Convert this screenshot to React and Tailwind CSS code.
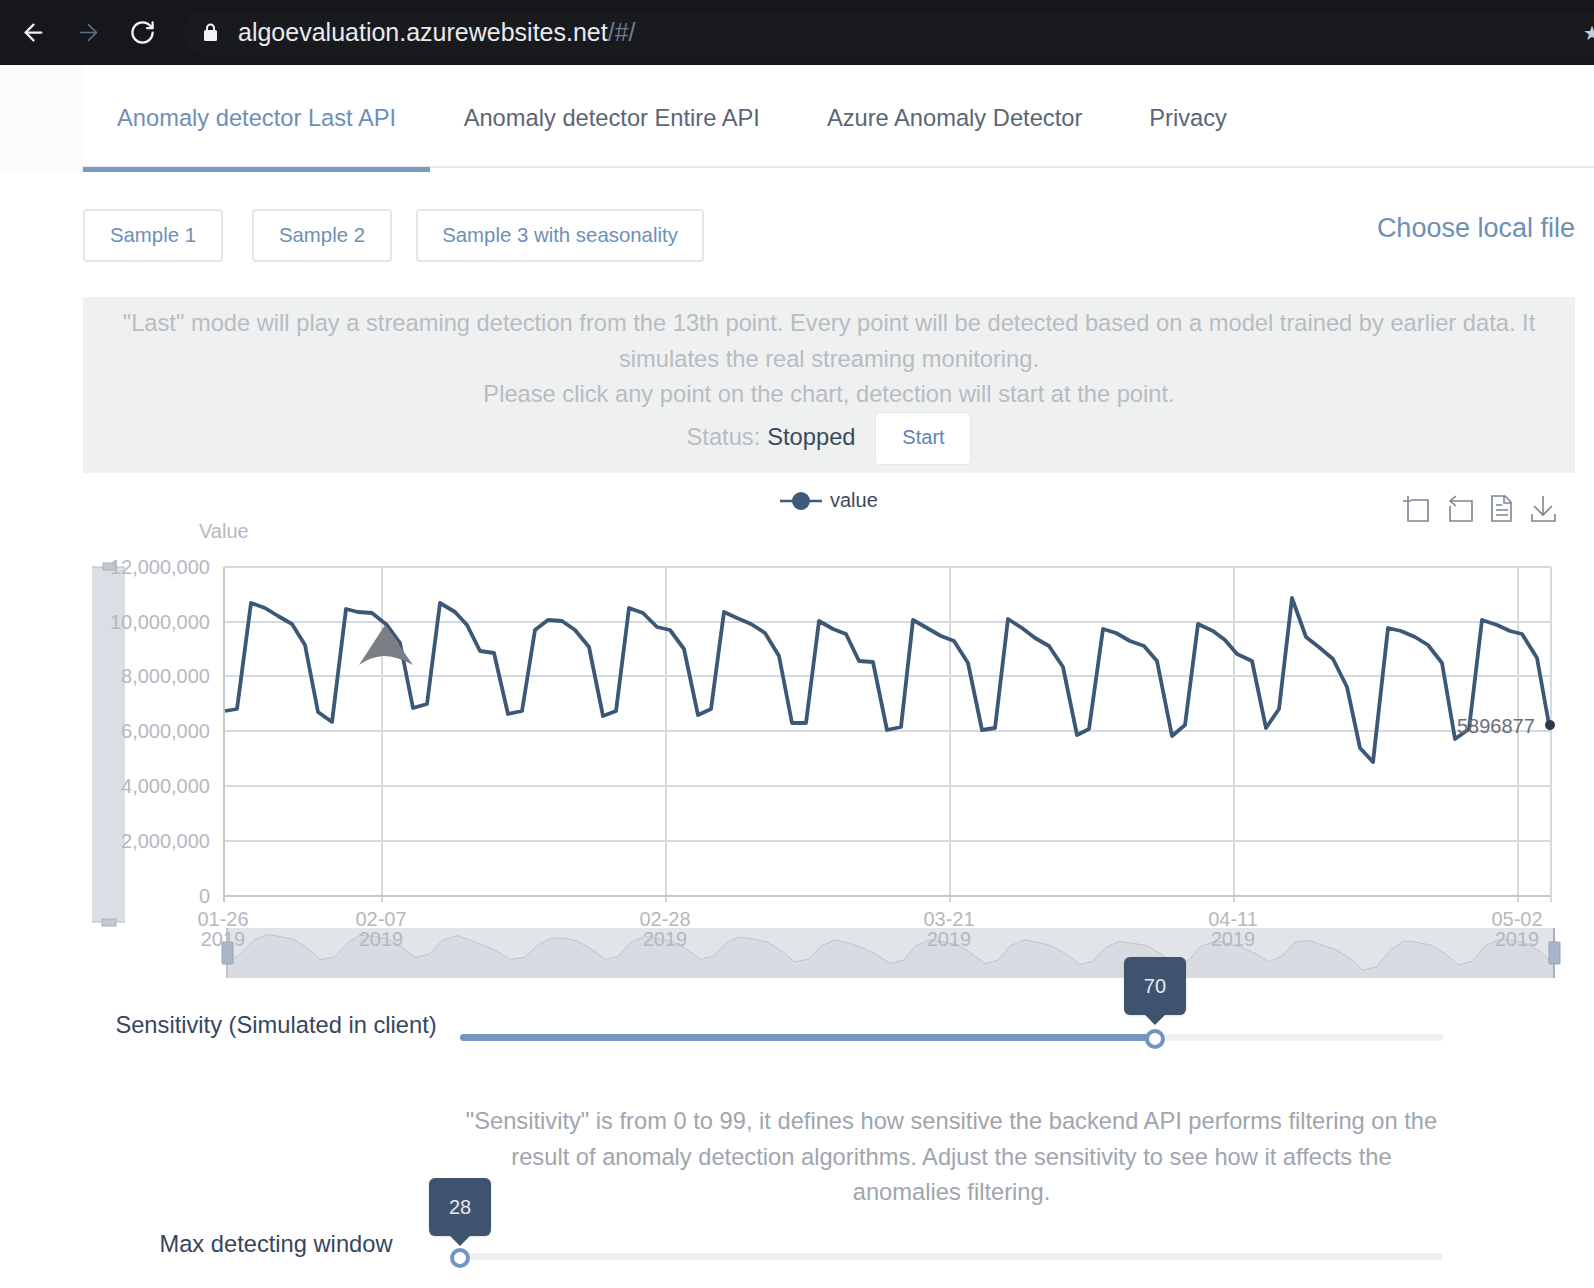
import { ArrowLeft, ArrowRight, RotateCw } from 'lucide-react'

const points = [
  [225,711],[237,709],[251,603],[265,608],[278,616],[292,624],[305,645],[318,712],[332,722],[346,609],
  [358,612],[372,613],[387,625],[400,643],[413,708],[427,704],[440,603],[455,612],[467,625],[480,651],
  [494,653],[508,714],[522,711],[535,630],[548,620],[562,621],[575,630],[589,647],[603,716],[616,711],
  [629,608],[643,613],[657,627],[670,630],[684,649],[698,715],[711,709],[724,612],[737,618],[751,624],
  [765,633],[779,656],[792,723],[806,723],[819,621],[833,629],[846,634],[859,661],[873,662],[887,730],
  [901,727],[913,620],[927,628],[941,636],[954,641],[968,663],[982,730],[995,728],[1008,619],[1022,628],
  [1035,638],[1049,646],[1063,667],[1077,735],[1089,729],[1103,629],[1116,633],[1130,641],[1144,646],[1157,661],
  [1172,736],[1185,725],[1198,624],[1213,631],[1225,640],[1237,654],[1252,661],[1266,728],[1279,709],[1292,598],
  [1306,637],[1320,648],[1333,659],[1347,687],[1360,748],[1373,762],[1388,628],[1401,631],[1415,637],[1428,645],
  [1442,663],[1455,739],[1469,729],[1482,620],[1497,625],[1510,631],[1522,634],[1537,658],[1550,730],
]

const linePath = points.map(p => p.join(',')).join(' ')

// the zoom preview is a smoothed copy of the series
const smooth = points.map(([x, y], i) => {
  const prev = points[Math.max(i - 1, 0)][1]
  const next = points[Math.min(i + 1, points.length - 1)][1]
  return [x, (prev + y * 2 + next) / 4]
})
const miniLine = smooth.map(([x, y]) => `${227 + (x - 225) * 1.001},${(939 + (y - 625) * 0.28).toFixed(1)}`).join(' ')
const miniArea = `227,978 ${miniLine} 1554,978`

const yLabels = [
  ['12,000,000', 567], ['10,000,000', 622], ['8,000,000', 676], ['6,000,000', 731],
  ['4,000,000', 786], ['2,000,000', 841], ['0', 896],
]
const xLabels = [['01-26', 223], ['02-07', 381], ['02-28', 665], ['03-21', 949], ['04-11', 1233], ['05-02', 1517]]

function Chart() {
  return (
    <svg viewBox="83 473 1492 520" width="1492" height="520" className="block" fontFamily="'Liberation Sans', Arial, sans-serif">
      {/* legend */}
      <line x1="780" y1="501" x2="822" y2="501" stroke="#3f5a7a" strokeWidth="2.5" />
      <circle cx="801" cy="501" r="9" fill="#3f5a7a" />
      <text x="830" y="507" fontSize="20" fill="#3d4a5c">value</text>
      <text x="199" y="538" fontSize="20" fill="#b5b8bf">Value</text>

      {/* toolbox */}
      <g fill="none" stroke="#7d8590" strokeWidth="1.6">
        <path d="M1403 501h8M1408 496v8M1411 500h17v21h-20v-17" />
        <path d="M1456 496l-6 5 6 5M1450 501h22v20h-22v-15" />
        <path d="M1492 496h13l6 6v19h-19zM1504 496v7h7M1496 505h6M1496 510h12M1496 515h12" />
        <path d="M1543 496v19M1534 506l9 9 9-9M1532 514v7h23v-7" />
      </g>

      {/* vertical zoom */}
      <rect x="92" y="567" width="33" height="355" fill="#dadfe6" />
      <path d="M92 567h33M92 922h33" stroke="#b5bac3" strokeWidth="1" />
      <rect x="103" y="563" width="12" height="7" fill="#c3c9d3" stroke="#aab1bc" />
      <rect x="102" y="919" width="14" height="7" fill="#c3c9d3" stroke="#aab1bc" />

      {/* horizontal zoom */}
      <rect x="227" y="928" width="1327" height="50" fill="#e1e4e9" />
      <polygon points={miniArea} fill="#d8dbe1" />
      <polyline points={miniLine} fill="none" stroke="#c0c4cb" strokeWidth="1" />
      <rect x="226" y="928" width="2" height="50" fill="#bfc4cd" />
      <rect x="1553" y="928" width="2" height="50" fill="#a9aeb7" />
      <rect x="222" y="942" width="11" height="22" rx="1" fill="#a9b6c8" stroke="#93a3b8" />
      <rect x="1549" y="942" width="11" height="22" rx="1" fill="#a9b6c8" stroke="#93a3b8" />

      {/* grid */}
      <g stroke="#d5dae2" strokeWidth="2">
        {yLabels.slice(0, 6).map(([t, y]) => <line key={t} x1="224" y1={y} x2="1551" y2={y} />)}
        {[382, 666, 950, 1234, 1518, 1551].map(x => <line key={x} x1={x} y1="567" x2={x} y2="902" />)}
      </g>
      <path d="M224 567V902M224 896H1551" stroke="#c4c8d0" strokeWidth="2" fill="none" />

      {yLabels.map(([t, y]) => (
        <text key={t} x="210" y={y + 7} textAnchor="end" fontSize="20" fill="#b5b8bf">{t}</text>
      ))}
      {xLabels.map(([d, x]) => (
        <g key={d} fontSize="20" fill="#b5b8bf" textAnchor="middle">
          <text x={x} y="926">{d}</text>
          <text x={x} y="946">2019</text>
        </g>
      ))}

      <polyline points={linePath} fill="none" stroke="#3d5877" strokeWidth="3.8" strokeLinejoin="round" />
      <circle cx="1550" cy="725" r="5" fill="#2c3a4e" />
      <text x="1457" y="733" fontSize="20" fill="#6a6e76">5896877</text>

      {/* mouse cursor */}
      <path d="M385 625L413 665Q397 656 383 656Q370 657 359 665Z" fill="#7b7e85" />
    </svg>
  )
}

function Slider({ value, pct, tipClass }) {
  return (
    <div className="relative h-[7px] rounded-full bg-[#eef0f2]">
      <div className="absolute left-0 top-0 h-full rounded-full bg-[#7496c2]" style={{ width: `${pct}%` }} />
      <div
        className="absolute top-[-5px] h-[20px] w-[20px] -translate-x-1/2 rounded-full border-[4px] border-[#6f96c2] bg-white"
        style={{ left: `${pct}%` }}
      />
      <div
        className={`absolute flex h-[58px] w-[62px] -translate-x-1/2 items-center justify-center rounded-md bg-[#3f536f] text-[20px] text-[#e6e9ee] shadow ${tipClass}`}
        style={{ left: `${pct}%` }}
      >
        {value}
        <div className="absolute bottom-[-7px] left-1/2 h-[14px] w-[14px] -translate-x-1/2 rotate-45 bg-[#3f536f]" />
      </div>
    </div>
  )
}

export default function App() {
  return (
    <div className="h-[1288px] overflow-hidden bg-white font-['Liberation_Sans',Arial,sans-serif]">
      <div className="flex h-[65px] items-center overflow-hidden bg-[#16171b] pl-[20px]">
        <ArrowLeft size={27} strokeWidth={2} className="shrink-0 text-[#f1f3f4]" />
        <ArrowRight size={27} strokeWidth={1.5} className="ml-[28px] shrink-0 text-[#5f6f86]" />
        <RotateCw size={27} strokeWidth={2} className="ml-[27px] shrink-0 text-[#f1f3f4]" />
        <div className="ml-[27px] flex h-[44px] w-[1430px] shrink-0 items-center rounded-l-full bg-[#191a1e] pl-[20px]">
          <svg width="15" height="19" viewBox="0 0 15 19" className="text-[#f1f3f4]">
            <path d="M4 8V5a3.5 3.5 0 0 1 7 0v3" fill="none" stroke="currentColor" strokeWidth="2" />
            <rect x="1" y="7" width="13" height="11" rx="1.5" fill="currentColor" />
          </svg>
          <span className="ml-[20px] text-[25px] text-[#e8eaed]">
            algoevaluation.azurewebsites.net<span className="text-[#6d7d93]">/#/</span>
          </span>
          <span className="ml-auto mr-[12px] text-[20px] text-[#c3cbd8]">★</span>
        </div>
      </div>

      <div className="flex h-[107px]">
        <div className="w-[83px] bg-[#fbfbfb]" />
        <nav className="flex h-[103px] flex-1 border-b-2 border-[#e6e8ea] text-[23.7px] text-[#5b6675]">
          <div className="flex h-[107px] items-center self-start border-b-[5px] border-[#7a9ac2] px-[34px] pt-[6px] text-[#6d8fb8]">
            Anomaly detector Last API
          </div>
          <div className="flex items-center px-[33.5px] pt-[7px]">Anomaly detector Entire API</div>
          <div className="flex items-center px-[33.5px] pt-[7px]">Azure Anomaly Detector</div>
          <div className="flex items-center px-[33.5px] pt-[7px]">Privacy</div>
        </nav>
      </div>

      <main className="pl-[83px] pr-[19px]">
        <div className="flex items-start justify-between pt-[37px]">
          <div className="flex text-[20.4px] font-medium text-[#6d8fb8]">
            <button className="h-[53px] w-[140px] rounded border-2 border-[#e3e6ea]">Sample 1</button>
            <button className="ml-[29px] h-[53px] w-[140px] rounded border-2 border-[#e3e6ea]">Sample 2</button>
            <button className="ml-[24px] h-[53px] w-[288px] rounded border-2 border-[#e3e6ea]">Sample 3 with seasonality</button>
          </div>
          <div className="text-[27px] leading-[38px] text-[#6d8fb8]">Choose local file</div>
        </div>

        <div className="mt-[35px] h-[176px] bg-[#eff1f1] pt-[9px] text-center text-[23.7px] leading-[35.5px] text-[#b8bcc3]">
          <p className="px-[30px]">
            "Last" mode will play a streaming detection from the 13th point. Every point will be detected based on a model trained by earlier data. It simulates the real streaming monitoring.
          </p>
          <p>Please click any point on the chart, detection will start at the point.</p>
          <div className="mt-[-1px] flex items-center justify-center">
            <span>Status:</span>
            <span className="ml-[7px] text-[#3a4a5e]">Stopped</span>
            <button className="ml-[20px] h-[53px] w-[96px] rounded border border-[#e3e6ea] bg-white text-[20px] font-medium text-[#5d84b4]">Start</button>
          </div>
        </div>

        <Chart />

        <div className="mt-[17px] flex">
          <div className="ml-[9px] mt-[-3px] w-[368px] text-center text-[23.7px] leading-[36px] text-[#37465c]">Sensitivity (Simulated in client)</div>
          <div className="mr-[132px] flex-1 pt-[24px]">
            <Slider value={70} pct={70.7} tipClass="bottom-[26px]" />
          </div>
        </div>

        <div className="ml-[377px] mr-[132px] mt-[61px] text-center text-[23.7px] leading-[35.5px] text-[#a0a5ae]">
          "Sensitivity" is from 0 to 99, it defines how sensitive the backend API performs filtering on the result of anomaly detection algorithms. Adjust the sensitivity to see how it affects the anomalies filtering.
        </div>

        <div className="mt-[16px] flex">
          <div className="ml-[9px] mt-[-1px] w-[368px] text-center text-[23.7px] leading-[36px] text-[#37465c]">Max detecting window</div>
          <div className="mr-[132px] flex-1 pt-[26px]">
            <Slider value={28} pct={0} tipClass="bottom-[24px]" />
          </div>
        </div>
      </main>
    </div>
  )
}
